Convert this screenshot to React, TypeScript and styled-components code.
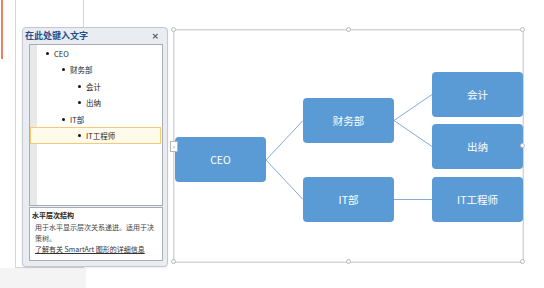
import styled, { createGlobalStyle } from "styled-components";

const GlobalStyle = createGlobalStyle`
  html, body {
    margin: 0;
    padding: 0;
    background: #ffffff;
  }
  body {
    font-family: "Noto Sans", "Noto Sans CJK SC", sans-serif;
  }
`;

const Screen = styled.div`
  position: relative;
  display: flex;
  width: 544px;
  height: 288px;
  overflow: hidden;
  background: #ffffff;
`;

const ThumbRail = styled.div`
  display: flex;
  flex-direction: column;
  width: 86px;
  flex-shrink: 0;
`;

const ThumbRow = styled.div`
  display: flex;
  height: 268px;
  padding-left: 1px;
`;

const SelectionMark = styled.div`
  width: 2px;
  height: 59px;
  background: #e9825f;
`;

const Thumbnail = styled.div`
  margin-left: 12px;
  width: 67px;
  border-left: 1px solid #d6d6d6;
  border-right: 1px solid #d6d6d6;
  border-bottom: 1px solid #d6d6d6;
  background: #ffffff;
`;

const RailFoot = styled.div`
  flex: 1;
  background: #f4f4f4;
`;

const SlideArea = styled.div`
  flex: 1;
  padding: 29px 0 0 87px;
`;

const Frame = styled.div`
  position: relative;
  width: 349px;
  height: 232px;
  border: 1px solid #d4d4d4;
  box-shadow: inset 0 0 0 1px #ececec;
`;

const Handle = styled.div<{ $x: string; $y: string }>`
  position: absolute;
  left: ${(p) => p.$x};
  top: ${(p) => p.$y};
  width: 5px;
  height: 5px;
  margin: -3px 0 0 -3px;
  border: 1px solid #b9b9b9;
  border-radius: 50%;
  background: #ffffff;
  box-sizing: border-box;
`;

const PaneToggle = styled.div`
  position: absolute;
  left: -4px;
  top: 111px;
  width: 6px;
  height: 9px;
  border: 1px solid #b5b5b5;
  background: #ffffff;
  font-size: 6px;
  line-height: 9px;
  text-align: center;
  color: #555;
  font-family: "DejaVu Sans", sans-serif;
`;

const Connectors = styled.svg`
  position: absolute;
  left: 0;
  top: 0;
  width: 349px;
  height: 232px;
  overflow: visible;
`;

const Node = styled.div<{ $x: number; $y: number }>`
  position: absolute;
  left: ${(p) => p.$x}px;
  top: ${(p) => p.$y}px;
  width: 91px;
  height: 45px;
  border-radius: 4px;
  background: #5b9bd5;
  color: #ffffff;
  font-size: 10.5px;
  display: flex;
  align-items: center;
  justify-content: center;
  font-family: "Noto Sans CJK SC", sans-serif;
`;

const TextPane = styled.div`
  position: absolute;
  left: 22px;
  top: 27px;
  width: 146px;
  height: 240px;
  box-sizing: border-box;
  border: 1px solid #c4c8ce;
  border-radius: 4px;
  background: #e9ecf1;
  box-shadow: 0 1px 2px rgba(0, 0, 0, 0.08);
  display: flex;
  flex-direction: column;
  padding: 0 4px 5px 6px;
`;

const PaneHeader = styled.div`
  display: flex;
  align-items: center;
  justify-content: space-between;
  height: 16px;
  margin-left: -4px;
  padding-right: 4px;
`;

const PaneTitle = styled.div`
  font-size: 9px;
  font-weight: bold;
  color: #1f4f8e;
  font-family: "Noto Sans CJK SC", sans-serif;
`;

const CloseButton = styled.div`
  font-size: 9px;
  font-weight: bold;
  color: #5a5a5a;
  font-family: "DejaVu Sans", sans-serif;
`;

const ListBox = styled.div`
  height: 163px;
  box-sizing: border-box;
  border: 1px solid #a9adb3;
  background: linear-gradient(to right, #e8e8e8 7px, #ffffff 7px);
`;

const Row = styled.div<{ $level: number; $active?: boolean }>`
  display: flex;
  align-items: center;
  height: 16.5px;
  box-sizing: border-box;
  padding-left: ${(p) => 15 + p.$level * 16}px;
  font-size: 7.5px;
  color: #222;
  font-family: "Noto Sans CJK SC", sans-serif;
  border: 1px solid ${(p) => (p.$active ? "#f3c97c" : "transparent")};
  background: ${(p) => (p.$active ? "#fffbea" : "transparent")};
  margin-right: 1px;
`;

const Bullet = styled.span`
  width: 3px;
  height: 3px;
  border-radius: 50%;
  background: #111;
  margin-right: 5px;
`;

const InfoBox = styled.div`
  margin-top: 1px;
  height: 54px;
  box-sizing: border-box;
  border: 1px solid #a9adb3;
  background: #ffffff;
  padding: 1px 2px 0 2px;
  font-family: "Noto Sans CJK SC", sans-serif;
`;

const InfoTitle = styled.div`
  font-size: 7px;
  font-weight: bold;
  color: #222;
  line-height: 12px;
`;

const InfoText = styled.div`
  font-size: 7px;
  color: #444;
  line-height: 11px;
  padding-left: 3px;
  margin-top: 1px;
  white-space: nowrap;
`;

const InfoLink = styled.div`
  font-size: 7px;
  color: #333;
  line-height: 11px;
  padding-left: 3px;
  text-decoration: underline;
  white-space: nowrap;
`;

const rows = [
  { level: 0, text: "CEO" },
  { level: 1, text: "财务部" },
  { level: 2, text: "会计" },
  { level: 2, text: "出纳" },
  { level: 1, text: "IT部" },
  { level: 2, text: "IT工程师", active: true },
];

const nodes = [
  { x: 1, y: 107, text: "CEO" },
  { x: 129, y: 68, text: "财务部" },
  { x: 129, y: 147, text: "IT部" },
  { x: 258, y: 42, text: "会计" },
  { x: 258, y: 94, text: "出纳" },
  { x: 258, y: 147, text: "IT工程师" },
];

const links = [
  [92, 130, 129, 90.5],
  [92, 130, 129, 169.5],
  [220, 90.5, 258, 64.5],
  [220, 90.5, 258, 116.5],
  [220, 169.5, 258, 169.5],
];

const handles = [
  ["0%", "0%"],
  ["50%", "0%"],
  ["100%", "0%"],
  ["100%", "50%"],
  ["100%", "100%"],
  ["50%", "100%"],
  ["0%", "100%"],
];

export default function App() {
  return (
    <>
      <GlobalStyle />
      <Screen>
        <ThumbRail>
          <ThumbRow>
            <SelectionMark />
            <Thumbnail />
          </ThumbRow>
          <RailFoot />
        </ThumbRail>

        <SlideArea>
          <Frame>
            <Connectors viewBox="0 0 349 232">
              {links.map(([x1, y1, x2, y2], i) => (
                <line key={i} x1={x1} y1={y1} x2={x2} y2={y2} stroke="#84acd6" strokeWidth="1" />
              ))}
            </Connectors>
            {nodes.map((n) => (
              <Node key={n.text} $x={n.x} $y={n.y}>
                {n.text}
              </Node>
            ))}
            {handles.map(([x, y], i) => (
              <Handle key={i} $x={x} $y={y} />
            ))}
            <PaneToggle>›</PaneToggle>
          </Frame>
        </SlideArea>

        <TextPane>
          <PaneHeader>
            <PaneTitle>在此处键入文字</PaneTitle>
            <CloseButton>×</CloseButton>
          </PaneHeader>
          <ListBox>
            {rows.map((r) => (
              <Row key={r.text} $level={r.level} $active={r.active}>
                <Bullet />
                {r.text}
              </Row>
            ))}
          </ListBox>
          <InfoBox>
            <InfoTitle>水平层次结构</InfoTitle>
            <InfoText>
              用于水平显示层次关系递进。适用于决
              <br />
              策树。
            </InfoText>
            <InfoLink>了解有关 SmartArt 图形的详细信息</InfoLink>
          </InfoBox>
        </TextPane>
      </Screen>
    </>
  );
}
